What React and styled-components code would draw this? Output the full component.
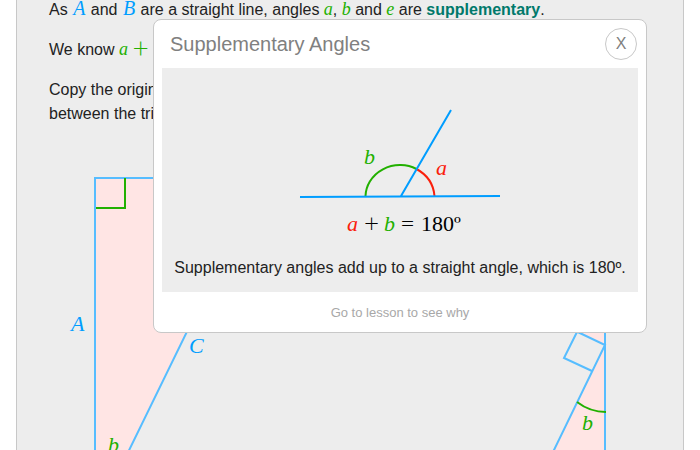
import React from "react";
import styled, { createGlobalStyle } from "styled-components";

const BLUE = "#009dff";
const LIGHT_BLUE = "#56bdff";
const GREEN = "#22b000";
const RED = "#fa200c";
const SERIF = '"Liberation Serif", "Times New Roman", serif';

const GlobalStyle = createGlobalStyle`
  * { box-sizing: border-box; }
  html, body { height: 100%; }
  body {
    margin: 0;
    overflow: hidden;
    background: #fff;
    color: #222;
    font: 16px/24px "Liberation Sans", Arial, sans-serif;
  }
`;

const Page = styled.div`
  position: relative;
  height: 100vh;
  padding: 0 16px;
  overflow: hidden;
`;

const Lesson = styled.article`
  height: 100%;
  padding: 0 32px;
  overflow: hidden;
  background: #ededed;
  border: solid #c8c8c8;
  border-width: 0 1px;
`;

const LessonText = styled.div`
  margin-top: -2px;
`;

const Paragraph = styled.p`
  margin: 0 0 16px;
`;

const Variable = styled.i`
  padding: 0 ${(p) => (p.$capital ? 1 : 0)}px;
  color: ${(p) => p.$color};
  font-family: ${SERIF};
  font-size: ${(p) => (p.$capital ? 20 : 18)}px;
  line-height: 16px;
`;

const Operator = styled.span`
  color: ${GREEN};
  font-family: Lato, ${SERIF};
  font-size: 28px;
  font-weight: 300;
  line-height: 0;
  vertical-align: -3px;
`;

const TermLink = styled.a`
  color: #00796b;
  font-weight: bold;
  text-decoration: none;
`;

const Drawing = styled.svg`
  display: block;
  max-width: 100%;
  margin: 0 auto;
  overflow: visible;
  fill: none;
  stroke-width: 2;
`;

const Label = styled.text`
  fill: ${(p) => p.$color};
  font-family: ${SERIF};
  font-size: 22px;
  font-style: ${(p) => (p.$upright ? "normal" : "italic")};
`;

const Sign = styled.text`
  fill: #000;
  font-family: Lato, ${SERIF};
  font-size: 26px;
  font-weight: 300;
`;

const Popup = styled.section`
  position: absolute;
  top: 19px;
  right: 53px;
  width: 494px;
  max-width: calc(100% - 70px);
  padding: 0 8px;
  background: #fff;
  border: 1px solid #c8c8c8;
  border-radius: 8px;
`;

const PopupHeader = styled.header`
  display: flex;
  align-items: center;
  justify-content: space-between;
  height: 48px;
  padding: 0 1px 0 8px;
`;

const PopupTitle = styled.h2`
  margin: 0;
  color: #808080;
  font-size: 20px;
  font-weight: normal;
`;

const CloseButton = styled.button`
  width: 32px;
  height: 32px;
  padding: 0;
  border: 1px solid #c8c8c8;
  border-radius: 50%;
  background: #fff;
  color: #808080;
  font: inherit;
`;

const PopupBody = styled.div`
  padding: 12px;
  background: #ededed;
  text-align: center;
`;

const Statement = styled.p`
  margin: 16px 0 0;
`;

const PopupFooter = styled.footer`
  display: flex;
  align-items: center;
  justify-content: center;
  height: 40px;
  padding-top: 2px;
`;

const LessonLink = styled.a`
  color: #a8a8a8;
  font-size: 13px;
  text-decoration: none;
`;

function TriangleDrawing() {
  return (
    <Drawing width="600" height="309" viewBox="0 1 600 309" role="img" aria-label="Two right triangles">
      <path d="M45 37H212L45 379Z" fill="#ffe5e4" stroke={LIGHT_BLUE} />
      <path d="M46 67H75V37" stroke={GREEN} />
      <path d="M555 379V160L490 175L527 191L555 204L470 379Z" fill="#ffe5e4" />
      <path d="M555 160V379M490 173L555 204L470 379M527 191L514 217L542 230" stroke={LIGHT_BLUE} />
      <path d="M527 261Q540 271 556 271" stroke={GREEN} />
      <Label x="21" y="190" $color={BLUE}>A</Label>
      <Label x="139" y="212" $color={BLUE}>C</Label>
      <Label x="58" y="311" $color={GREEN}>b</Label>
      <Label x="532" y="289" $color={GREEN}>b</Label>
    </Drawing>
  );
}

function AngleDrawing() {
  return (
    <Drawing width="200" height="160" viewBox="0 0 200 160" role="img" aria-label="Angles a and b on a straight line">
      <path d="M65.5 116A34.5 32 0 0 1 116.5 89" stroke={GREEN} />
      <path d="M116.5 89Q133 98 134.5 116" stroke={RED} />
      <path d="M0 117L200 116M101 116L151 30" stroke={BLUE} />
      <Label x="64" y="84" $color={GREEN}>b</Label>
      <Label x="136" y="95" $color={RED}>a</Label>
      <Label x="47" y="151" $color={RED}>a</Label>
      <Sign x="64" y="152">+</Sign>
      <Label x="84" y="151" $color={GREEN}>b</Label>
      <Sign x="100" y="152">=</Sign>
      <Label x="121" y="151" $color="#000" $upright>180º</Label>
    </Drawing>
  );
}

export default function App() {
  return (
    <>
      <GlobalStyle />
      <Page>
        <Lesson>
          <LessonText>
            <Paragraph>
              As <Variable $color={BLUE} $capital>A</Variable> and{" "}
              <Variable $color={BLUE} $capital>B</Variable> are a straight line, angles{" "}
              <Variable $color={GREEN}>a</Variable>, <Variable $color={GREEN}>b</Variable> and{" "}
              <Variable $color={GREEN}>e</Variable> are{" "}
              <TermLink href="#supplementary">supplementary</TermLink>.
            </Paragraph>
            <Paragraph>
              We know <Variable $color={GREEN}>a</Variable> <Operator>+</Operator>
            </Paragraph>
            <Paragraph>
              Copy the original
              <br />
              between the triangles
            </Paragraph>
          </LessonText>
          <TriangleDrawing />
        </Lesson>
        <Popup role="dialog" aria-labelledby="popup-title" id="supplementary">
          <PopupHeader>
            <PopupTitle id="popup-title">Supplementary Angles</PopupTitle>
            <CloseButton type="button" aria-label="Close">X</CloseButton>
          </PopupHeader>
          <PopupBody>
            <AngleDrawing />
            <Statement>Supplementary angles add up to a straight angle, which is 180º.</Statement>
          </PopupBody>
          <PopupFooter>
            <LessonLink href="#lesson">Go to lesson to see why</LessonLink>
          </PopupFooter>
        </Popup>
      </Page>
    </>
  );
}
